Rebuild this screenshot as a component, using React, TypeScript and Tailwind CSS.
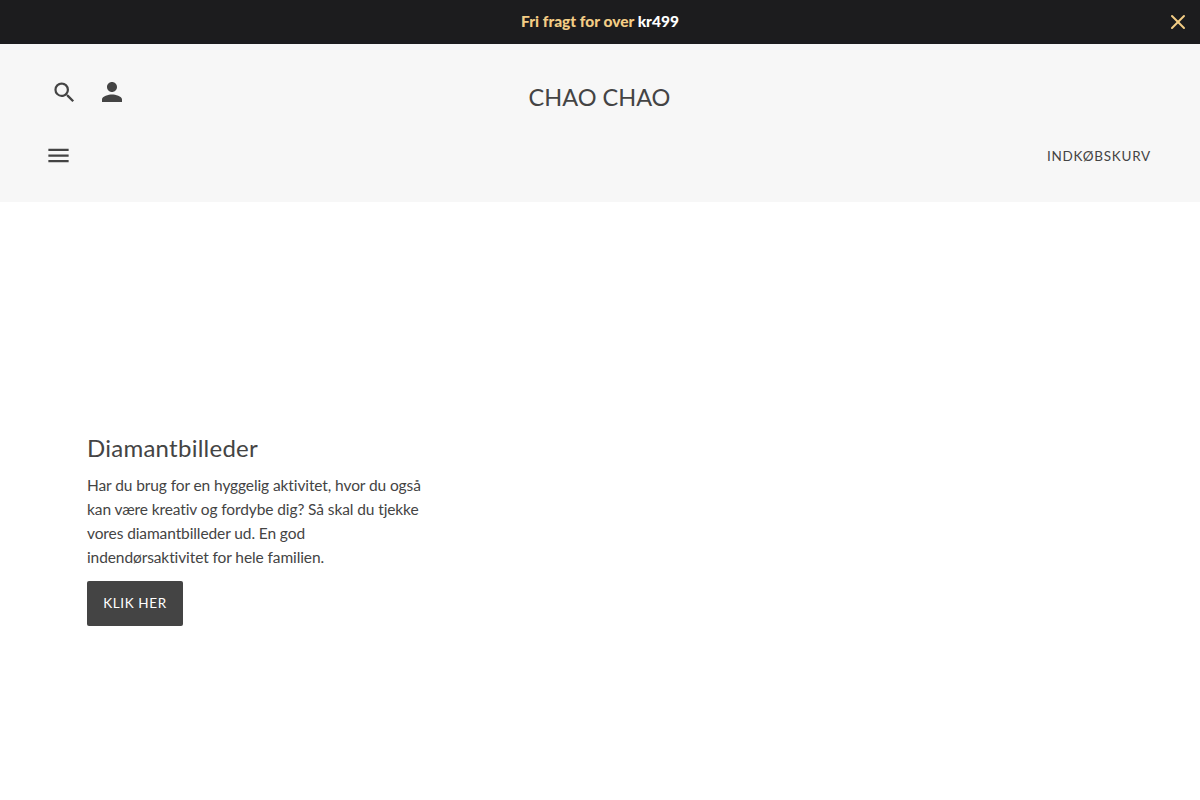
import { MdMenu, MdPerson, MdSearch } from "react-icons/md";
import { X } from "lucide-react";

function AnnouncementBar() {
  return (
    <div className="relative flex h-[44px] items-center justify-center bg-[#1c1c1e] text-[15.5px] font-black">
      <p className="text-[#f3cd85]">
        Fri fragt for over <span className="text-white">kr499</span>
      </p>
      <button type="button" className="absolute right-[10px] top-[10px] text-[#f3cd85]" aria-label="Luk">
        <X size={24} strokeWidth={2} />
      </button>
    </div>
  );
}

function Header() {
  return (
    <header className="h-[158px] bg-[#f7f7f7] pl-[48px] pr-[49px] pt-[30px] text-[#444444]">
      <div className="grid h-[36px] grid-cols-3 items-center">
        <div className="flex items-center gap-[19px] pl-[3px]">
          <MdSearch size={27} />
          <MdPerson size={30} />
        </div>
        <p className="pt-[10px] text-center text-[23.5px] leading-[26px]">CHAO CHAO</p>
        <div />
      </div>
      <div className="mt-[32px] flex items-center justify-between">
        <MdMenu size={27} className="-ml-[3px]" />
        <a href="#" className="mt-px text-[13.5px] tracking-[0.75px]">INDKØBSKURV</a>
      </div>
    </header>
  );
}

function Hero() {
  return (
    <section className="h-[598px] pl-[87px] pt-[228px] text-[#444444]">
      <h2 className="text-[24px] leading-[36px] tracking-[0.25px]">Diamantbilleder</h2>
      <p className="mt-[7px] w-[340px] text-[15.5px] leading-[24px] tracking-[-0.1px]">
        Har du brug for en hyggelig aktivitet, hvor du også kan være kreativ og fordybe dig? Så skal du tjekke vores diamantbilleder ud. En god indendørsaktivitet for hele familien.
      </p>
      <button type="button" className="mt-[12px] h-[45px] w-[96px] rounded-[2px] bg-[#444444] pb-px text-[13.5px] tracking-[0.6px] text-white">
        KLIK HER
      </button>
    </section>
  );
}

export default function App() {
  return (
    <div className="h-[800px] overflow-hidden bg-white font-['Lato',sans-serif]">
      <AnnouncementBar />
      <Header />
      <Hero />
    </div>
  );
}
